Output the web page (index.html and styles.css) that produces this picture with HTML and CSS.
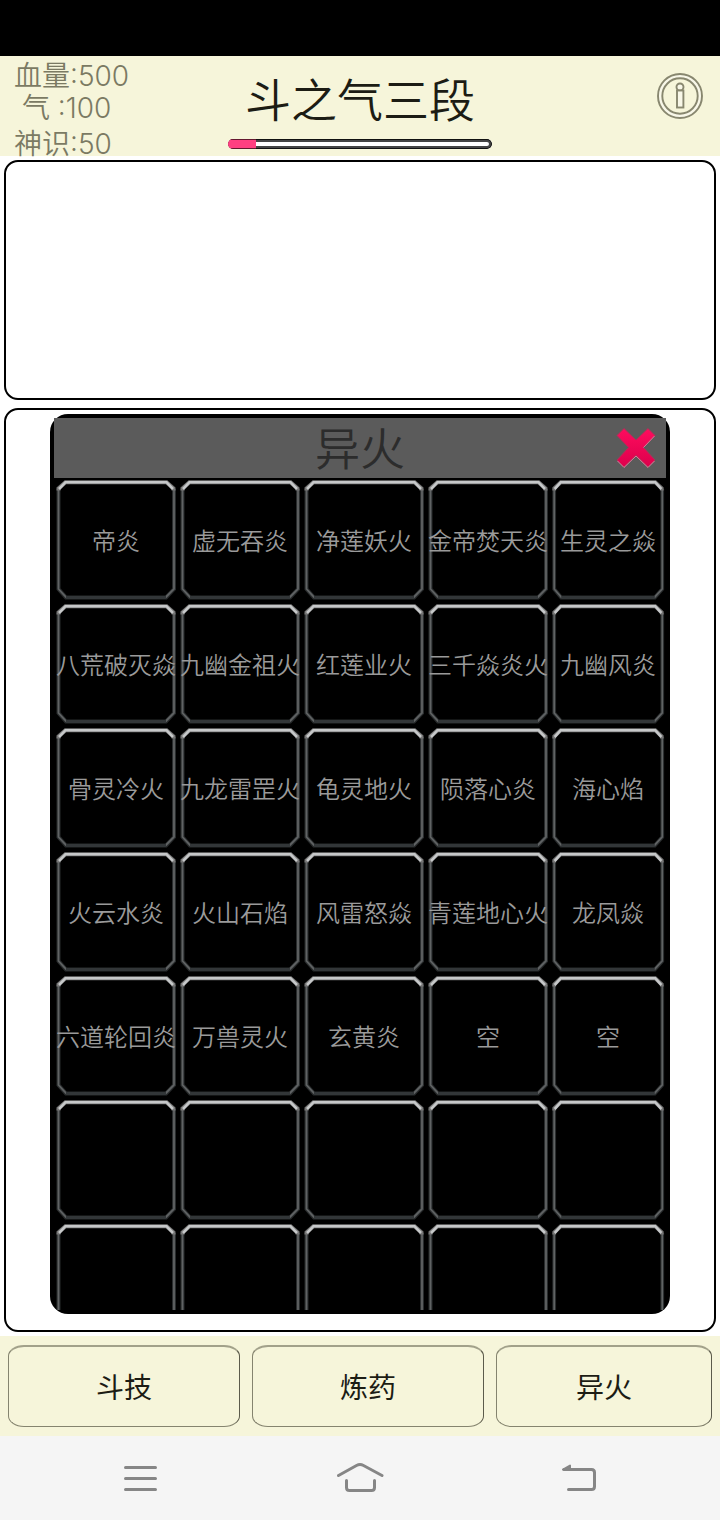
FILE: index.html
```html
<!DOCTYPE html>
<html lang="zh-CN">
<head>
<meta charset="utf-8">
<meta name="viewport" content="width=device-width, initial-scale=1">
<title>斗之气三段</title>
<link rel="stylesheet" href="styles.css">
</head>
<body>
<div class="status-bar"></div>
<header class="top">
  <ul class="stats">
    <li>血量:500</li>
    <li> 气 :100</li>
    <li>神识:50</li>
  </ul>
  <div class="rank">
    <h1 class="rank-name">斗之气三段</h1>
    <progress class="rank-progress" value="28" max="264" aria-label="修炼进度"></progress>
  </div>
  <button class="info" type="button" aria-label="信息">
    <svg width="48" height="48" viewBox="0 0 48 48" fill="none" stroke="#88876f" stroke-width="1.9">
      <circle cx="24" cy="24" r="22" fill="#f8f7e8"/>
      <circle cx="24" cy="24" r="17.7" fill="#f6f5da"/>
      <circle cx="24" cy="15" r="3.5" fill="#f8f7e8"/>
      <rect x="21" y="18.5" width="6.4" height="17" fill="#f8f7e8"/>
    </svg>
  </button>
</header>

<main class="content">
  <section class="box log" aria-label="日志"></section>
  <section class="box stage">
    <div class="modal" role="dialog" aria-labelledby="modal-title">
      <div class="modal-head">
        <h2 class="modal-title" id="modal-title">异火</h2>
        <button class="close" type="button" aria-label="关闭">
          <svg width="44" height="44" viewBox="0 0 44 44">
            <defs>
              <linearGradient id="red" x1="0" y1="0" x2="0" y2="1">
                <stop offset="0" stop-color="#ff0c5e"/>
                <stop offset="1" stop-color="#dc004c"/>
              </linearGradient>
            </defs>
            <path d="M10 2.500 22 14 34 2.500 41 9.500 29.500 21.500 41 34 34 41 22 29.500 10 41 3 34 14.500 21.500 3 9.500Z" fill="url(#red)" stroke="#a93458" stroke-width="1" stroke-linejoin="round"/>
            <path d="M3.500 35 10 41.500 22 30 34 41.500 40.500 35M29.500 21.500 40.500 10" fill="none" stroke="#dc7b9a" stroke-width="1" stroke-linejoin="round"/>
          </svg>
        </button>
      </div>
      <div class="slots">
        <button class="slot" type="button">帝炎</button>
        <button class="slot" type="button">虚无吞炎</button>
        <button class="slot" type="button">净莲妖火</button>
        <button class="slot" type="button">金帝焚天炎</button>
        <button class="slot" type="button">生灵之焱</button>
        <button class="slot" type="button">八荒破灭焱</button>
        <button class="slot" type="button">九幽金祖火</button>
        <button class="slot" type="button">红莲业火</button>
        <button class="slot" type="button">三千焱炎火</button>
        <button class="slot" type="button">九幽风炎</button>
        <button class="slot" type="button">骨灵冷火</button>
        <button class="slot" type="button">九龙雷罡火</button>
        <button class="slot" type="button">龟灵地火</button>
        <button class="slot" type="button">陨落心炎</button>
        <button class="slot" type="button">海心焰</button>
        <button class="slot" type="button">火云水炎</button>
        <button class="slot" type="button">火山石焰</button>
        <button class="slot" type="button">风雷怒焱</button>
        <button class="slot" type="button">青莲地心火</button>
        <button class="slot" type="button">龙凤焱</button>
        <button class="slot" type="button">六道轮回炎</button>
        <button class="slot" type="button">万兽灵火</button>
        <button class="slot" type="button">玄黄炎</button>
        <button class="slot" type="button">空</button>
        <button class="slot" type="button">空</button>
        <div class="slot"></div>
        <div class="slot"></div>
        <div class="slot"></div>
        <div class="slot"></div>
        <div class="slot"></div>
        <div class="slot"></div>
        <div class="slot"></div>
        <div class="slot"></div>
        <div class="slot"></div>
        <div class="slot"></div>
      </div>
    </div>
  </section>
</main>

<footer class="actions">
  <button class="action" type="button">斗技</button>
  <button class="action" type="button">炼药</button>
  <button class="action" type="button">异火</button>
</footer>

<nav class="system-nav" aria-label="系统导航">
  <button class="nav-key" type="button" aria-label="菜单">
    <svg width="48" height="36" viewBox="0 0 48 36" fill="none" stroke="#868686" stroke-width="3" stroke-linecap="round">
      <path d="M9.500 7.500H39.500M9.500 18.500H39.500M9.500 29.500H39.500"/>
    </svg>
  </button>
  <button class="nav-key" type="button" aria-label="主页">
    <svg width="48" height="36" viewBox="0 0 48 36" fill="none" stroke="#868686" stroke-width="3" stroke-linecap="round" stroke-linejoin="round">
      <path d="M2.500 15.500 20.500 5.500Q24 3.700 27.500 5.500L46 15.500M10.500 20.500V27.500Q10.500 30.500 13.500 30.500H35.500Q38.500 30.500 38.500 27.500V20.500"/>
    </svg>
  </button>
  <button class="nav-key" type="button" aria-label="返回">
    <svg width="48" height="36" viewBox="0 0 48 36" fill="none" stroke="#868686" stroke-width="3" stroke-linecap="round" stroke-linejoin="round">
      <path d="M8 9.500H35.500Q38.500 9.500 38.500 12.500V26.500Q38.500 29.500 35.500 29.500H12.500"/>
      <path d="M7 9.500 14 5.500V9.500Z" fill="#868686" stroke-width="2"/>
    </svg>
  </button>
</nav>
</body>
</html>
```
FILE: styles.css
```css
* {
  box-sizing: border-box;
}

body {
  margin: 0;
  height: 100vh;
  display: flex;
  flex-direction: column;
  background: #fff;
  color: #1c1c14;
  font-family: Inter, "Noto Sans CJK SC", sans-serif;
}

button {
  margin: 0;
  padding: 0;
  border: 0;
  background: none;
  color: inherit;
  font: inherit;
}

svg {
  display: block;
}

.status-bar {
  flex: none;
  height: 56px;
  background: #000;
}

.top {
  flex: none;
  height: 100px;
  display: grid;
  grid-template-columns: 1fr 264px 1fr;
  background: #f6f5da;
}

.stats {
  margin: 0;
  padding: 4px 0 0 14px;
  list-style: none;
  font-size: 28px;
  font-weight: 350;
  line-height: 32px;
  color: #7b7a63;
}

.stats li {
  height: 32px;
  white-space: pre;
}

.stats li:last-child {
  margin-top: 4px;
}

.rank {
  display: flex;
  flex-direction: column;
  align-items: center;
}

.rank-name {
  margin: 0;
  padding-top: 12px;
  font-size: 46px;
  font-weight: 350;
  line-height: 64px;
  white-space: nowrap;
}

.rank-progress {
  appearance: none;
  display: block;
  width: 100%;
  height: 10px;
  margin-top: 7px;
  border: 0;
  border-radius: 5px;
  overflow: hidden;
  background: #fff;
}

.rank-progress::-webkit-progress-bar {
  background: #fff;
  border-radius: 5px;
  box-shadow: inset 0 0 0 1px #111, inset 0 0 0 3px #444;
}

.rank-progress::-webkit-progress-value {
  background: #ff4081;
  border-top: 1px solid #64182f;
  border-bottom: 1px solid #64182f;
}

.info {
  justify-self: end;
  align-self: start;
  margin: 16px 16px 0 0;
}

.content {
  flex: 1;
  min-height: 0;
  display: flex;
  flex-direction: column;
  gap: 8px;
  padding: 4px;
}

.box {
  border: 2px solid #000;
  border-radius: 14px;
}

.log {
  flex: none;
  height: 240px;
}

.stage {
  flex: 1;
  min-height: 0;
  display: flex;
  padding: 4px 44px 16px;
}

.modal {
  flex: 1;
  min-width: 0;
  display: flex;
  flex-direction: column;
  padding: 4px;
  border-radius: 18px;
  background: #000;
}

.modal-head {
  flex: none;
  height: 60px;
  display: grid;
  grid-template-columns: 1fr auto 1fr;
  align-items: center;
  background: #5b5b5b;
  color: #2c2c2c;
}

.modal-title {
  grid-column: 2;
  margin: 0;
  padding-top: 4px;
  font-size: 45px;
  font-weight: 350;
  line-height: 56px;
}

.close {
  justify-self: end;
  margin-right: 8px;
}

.slots {
  flex: 1;
  min-height: 0;
  display: grid;
  grid-template-columns: repeat(4, 124fr) 116fr;
  grid-auto-rows: 124px;
  overflow: hidden;
}

.slot {
  min-width: 0;
  padding-top: 4px;
  color: #9a9a9a;
  font-size: 24px;
  font-weight: 350;
  line-height: 32px;
  white-space: nowrap;
  background: url("data:image/svg+xml,%3Csvg xmlns='http://www.w3.org/2000/svg' viewBox='0 0 124 124' preserveAspectRatio='none' fill='none'%3E%3Cpath d='M4.500 11V111L12 119.500H112L120 111V11' stroke='%23292c2d' stroke-width='4'/%3E%3Cpath d='M4.500 11V111L12 119H112L120 111V11' stroke='%23606364' stroke-width='1.800'/%3E%3Cpath d='M12 119.500H112' stroke='%23323638' stroke-width='3'/%3E%3Cpath d='M4.500 12.500V10.500L11.500 4.200H112.500L119.500 10.500V12.500' stroke='%23777' stroke-width='4'/%3E%3Cpath d='M5 11L11.500 4.200H112.500L119 11' stroke='%23c6c8c9' stroke-width='2.600'/%3E%3C/svg%3E") center / 100% 100% no-repeat;
}

.actions {
  flex: none;
  height: 100px;
  display: grid;
  grid-template-columns: 232fr 232fr 216fr;
  gap: 12px;
  padding: 9px 8px;
  background: #f6f5da;
}

.action {
  padding-top: 3px;
  border: 1px solid #85846f;
  border-top: 2px solid #a2a18a;
  border-right-color: #5c5b4b;
  border-radius: 16px / 11px;
  font-size: 28px;
  font-weight: 400;
  line-height: 40px;
}

.system-nav {
  flex: none;
  height: 84px;
  display: grid;
  grid-template-columns: repeat(3, 1fr);
  padding: 0 30px;
  background: #f5f5f5;
}

.nav-key {
  display: grid;
  place-items: center;
}
```
